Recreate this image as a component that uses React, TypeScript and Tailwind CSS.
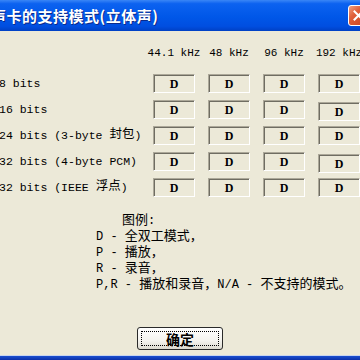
import React from 'react'

const rates = ['44.1 kHz', '48 kHz', '96 kHz', '192 kHz'];

const rows: { label: React.ReactNode; shift: boolean[] }[] = [
  { label: <>8 bits</>, shift: [false, false, false, false] },
  { label: <>16 bits</>, shift: [false, false, false, true] },
  { label: <>24 bits (3-byte{'\u00a0'}<span className="text-[12.5px]">封包</span>)</>, shift: [false, false, false, false] },
  { label: <>32 bits (4-byte PCM)</>, shift: [false, false, false, true] },
  { label: <>32 bits (IEEE{'\u00a0'}<span className="text-[12.5px]">浮点</span>)</>, shift: [false, false, false, false] },
];

const Cjk = ({ children }: { children: React.ReactNode }) => (
  <span className="text-[13px]">{children}</span>
);

const ModeBox = ({ shift }: { shift: boolean }) => (
  <div
    className={
      'w-[42px] h-[19px] shrink-0 flex items-center justify-center bg-[#ECE9D8] border-t border-l border-t-[#aca899] border-l-[#aca899] border-b border-r border-b-white border-r-white shadow-[inset_1px_1px_#6f6d62] text-[12px] font-bold text-black ' +
      (shift ? 'mt-[2px]' : '')
    }
    style={{ fontFamily: '"Liberation Serif", serif' }}
  >
    D
  </div>
);

const App = () => {
  return (
    <div
      className="w-[360px] h-[360px] overflow-hidden flex flex-col bg-[#ECE9D8] text-black"
      style={{ fontFamily: '"Liberation Mono", "Noto Sans CJK SC", monospace' }}
    >
      {/* title bar */}
      <div className="h-[31px] shrink-0 flex items-center justify-between bg-[linear-gradient(to_bottom,#3a86f6_0%,#0c62f0_12%,#0057e8_55%,#004ee0_85%,#0040c4_100%)]">
        <div
          className="ml-[-9px] text-white font-bold text-[15px] leading-none tracking-[0.5px] [text-shadow:1px_1px_#0b2a8a]"
          style={{ fontFamily: '"Noto Sans CJK SC", sans-serif' }}
        >
          声卡的支持模式(立体声)
        </div>
        <div className="mr-[-9px] w-[21px] h-[21px] shrink-0 rounded-[3px] border border-white bg-[linear-gradient(to_bottom_right,#f0a080_0%,#e0603a_35%,#c8401c_100%)] flex items-center justify-center">
          <svg width="11" height="11" viewBox="0 0 11 11">
            <path d="M1.5 1.5 L9.5 9.5 M9.5 1.5 L1.5 9.5" stroke="white" strokeWidth="2" strokeLinecap="square" />
          </svg>
        </div>
      </div>

      {/* body */}
      <div className="flex-1 flex flex-col">
        <div className="mt-[15px] h-[14px] flex items-center pl-[153px] gap-[13px] text-[11px] leading-none">
          {rates.map((r) => (
            <div key={r} className="w-[42px] shrink-0 flex justify-center">
              <span className="whitespace-nowrap">{r}</span>
            </div>
          ))}
        </div>

        <div className="mt-[14px] flex flex-col gap-[7px]">
          {rows.map((row, i) => (
            <div key={i} className="h-[19px] flex items-start">
              <div className="w-[153px] shrink-0 h-[19px] flex items-center ml-[-1px] text-[11.5px] whitespace-nowrap">
                {row.label}
              </div>
              <div className="flex gap-[13px] ml-[1px]">
                {row.shift.map((s, j) => (
                  <ModeBox key={j} shift={s} />
                ))}
              </div>
            </div>
          ))}
        </div>

        <div className="mt-[16px] pl-[96px] text-[12px] leading-[15px] whitespace-nowrap">
          <div className="pl-[26px]"><Cjk>图例</Cjk>:</div>
          <div>D - <Cjk>全双工模式，</Cjk></div>
          <div>P - <Cjk>播放，</Cjk></div>
          <div>R - <Cjk>录音，</Cjk></div>
          <div>P,R - <Cjk>播放和录音，</Cjk>N/A - <Cjk>不支持的模式。</Cjk></div>
        </div>

        <div className="mt-[34px] flex justify-center">
          <button className="w-[86px] h-[23px] rounded-[3px] border border-[#2a2a2a] bg-[linear-gradient(to_bottom,#ffffff_0%,#f4f3ee_60%,#dcdad0_100%)] p-[3px]">
            <div
              className="w-full h-full border border-dotted border-black flex items-center justify-center text-[14px] font-bold leading-none"
              style={{ fontFamily: '"Noto Sans CJK SC", sans-serif' }}
            >
              确定
            </div>
          </button>
        </div>
      </div>

      {/* bottom frame */}
      <div className="h-[1px] shrink-0 bg-[#c8d4ee]" />
      <div className="h-[4px] shrink-0 bg-[linear-gradient(to_bottom,#1a4fd0,#0a2fa8)]" />
    </div>
  )
}

export default App
